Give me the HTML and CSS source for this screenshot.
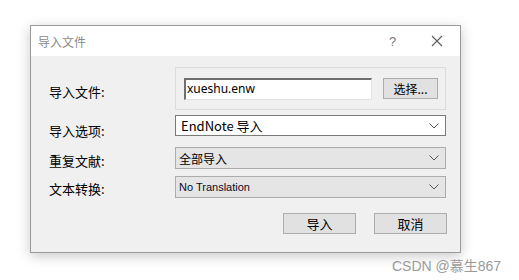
FILE: index.html
```html
<!DOCTYPE html>
<html lang="zh-CN">
<head>
    <meta charset="UTF-8">
    <title>导入文件</title>
    <link rel="stylesheet" href="styles.css">
</head>
<body>
    <div class="dialog">
        <!-- Title bar -->
        <div class="title-bar">
            <span class="title">导入文件</span>
            <span class="help">?</span>
            <span class="close">
                <svg width="12" height="12" viewBox="0 0 12 12"><path d="M1 1 L11 11 M11 1 L1 11" stroke="#5a5a5a" stroke-width="1.1" fill="none"/></svg>
            </span>
        </div>

        <div class="dialog-body">
            <div class="row row-file">
                <div class="label">导入文件:</div>
                <div class="group-box">
                    <div class="text-input">xueshu.enw</div>
                    <div class="btn btn-small">选择...</div>
                </div>
            </div>

            <div class="row row-options">
                <div class="label">导入选项:</div>
                <div class="select select-white">
                    <span class="select-text big">EndNote 导入</span>
                    <span class="arrow"><svg width="10" height="6" viewBox="0 0 10 6"><path d="M0.5 0.5 L5 5 L9.5 0.5" stroke="#555" stroke-width="1" fill="none"/></svg></span>
                </div>
            </div>

            <div class="row row-dup">
                <div class="label">重复文献:</div>
                <div class="select">
                    <span class="select-text">全部导入</span>
                    <span class="arrow"><svg width="10" height="6" viewBox="0 0 10 6"><path d="M0.5 0.5 L5 5 L9.5 0.5" stroke="#555" stroke-width="1" fill="none"/></svg></span>
                </div>
            </div>

            <div class="row row-trans">
                <div class="label">文本转换:</div>
                <div class="select">
                    <span class="select-text latin">No Translation</span>
                    <span class="arrow"><svg width="10" height="6" viewBox="0 0 10 6"><path d="M0.5 0.5 L5 5 L9.5 0.5" stroke="#555" stroke-width="1" fill="none"/></svg></span>
                </div>
            </div>

            <div class="button-row">
                <div class="btn btn-wide">导入</div>
                <div class="btn btn-wide">取消</div>
            </div>
        </div>
    </div>

    <div class="watermark">CSDN @慕生867</div>
</body>
</html>
```

FILE: styles.css
```css
body {
    margin: 0;
    background: #ffffff;
    font-family: "Noto Sans CJK SC", "Noto Sans", sans-serif;
    color: #000;
    width: 519px;
    height: 280px;
    overflow: hidden;
    position: relative;
}
.dialog {
    margin: 25px 0 0 30px;
    width: 429px;
    height: 226px;
    border: 1px solid #9a9a9a;
    background: #f0f0f0;
    box-shadow: 0 3px 12px rgba(0, 0, 0, 0.22);
    display: flex;
    flex-direction: column;
}
.title-bar {
    height: 30px;
    background: #ffffff;
    display: flex;
    align-items: center;
    padding-left: 7px;
    flex-shrink: 0;
}
.title {
    flex: 1;
    font-size: 12px;
    color: #8a8a8a;
}
.help {
    width: 20px;
    font-family: "Liberation Sans", sans-serif;
    font-size: 13px;
    color: #777;
    margin-right: 22px;
}
.close {
    width: 12px;
    height: 12px;
    margin-right: 17px;
    display: flex;
}
.dialog-body {
    padding: 11px 0 0 18px;
}
.row {
    display: flex;
    align-items: flex-start;
}
.label {
    width: 126px;
    font-size: 13px;
    line-height: 16px;
    height: 16px;
}
.row-file {
    height: 43px;
}
.row-file .label {
    margin-top: 17px;
}
.group-box {
    border: 1px solid #dcdcdc;
    display: flex;
    align-items: center;
    padding-left: 8px;
    box-sizing: border-box;
    width: 271px;
    height: 43px;
}
.text-input {
    width: 188px;
    height: 22px;
    box-sizing: border-box;
    background: #fff;
    border-top: 2px solid #6e6e6e;
    border-left: 2px solid #6e6e6e;
    border-right: 1px solid #e3e3e3;
    border-bottom: 1px solid #e3e3e3;
    font-family: "Noto Sans", sans-serif;
    font-size: 12px;
    line-height: 17px;
    padding-left: 1px;
}
.btn {
    background: #e1e1e1;
    border: 1px solid #adadad;
    box-sizing: border-box;
    display: flex;
    align-items: center;
    justify-content: center;
    font-size: 13px;
}
.btn-small {
    margin-left: 11px;
    width: 55px;
    height: 21px;
    font-size: 12px;
}
.row-options {
    margin-top: 5px;
    height: 21px;
}
.row-options .label {
    margin-top: 8px;
}
.row-dup {
    margin-top: 11px;
    height: 22px;
}
.row-dup .label {
    margin-top: 6px;
}
.row-trans {
    margin-top: 7px;
    height: 22px;
}
.row-trans .label {
    margin-top: 5px;
}
.select {
    width: 271px;
    height: 22px;
    box-sizing: border-box;
    background: #e5e5e5;
    border: 1px solid #acacac;
    display: flex;
    align-items: center;
    padding: 0 6px 0 2px;
}
.select-white {
    background: #ffffff;
    border-color: #7a7a7a;
    height: 21px;
}
.select-text {
    flex: 1;
    font-size: 12px;
    padding-left: 1px;
}
.select-text.big {
    font-size: 13px;
    padding-left: 3px;
}
.select-text.latin {
    font-family: "Liberation Sans", sans-serif;
    font-size: 11px;
    color: #0a0a2a;
}
.arrow {
    display: flex;
}
.button-row {
    display: flex;
    justify-content: flex-end;
    gap: 18px;
    margin-top: 15px;
    padding-right: 13px;
}
.btn-wide {
    width: 73px;
    height: 21px;
}
.watermark {
    position: absolute;
    left: 392px;
    top: 255px;
    font-family: "Liberation Sans", "Noto Sans CJK SC", sans-serif;
    font-size: 14px;
    color: #9a9a9a;
}
```
